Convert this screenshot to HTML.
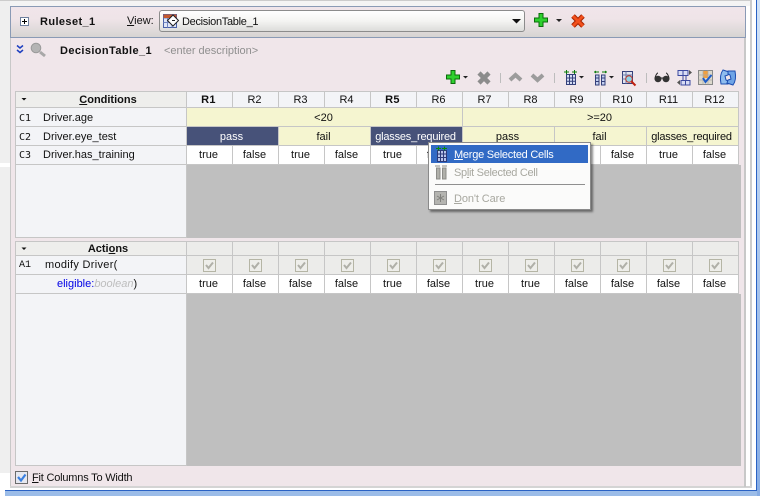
<!DOCTYPE html>
<html>
<head>
<meta charset="utf-8">
<style>
html,body{margin:0;padding:0;background:#fff}
#p{position:relative;width:760px;height:496px;overflow:hidden;background:#fff;font-family:"Liberation Sans",sans-serif;font-size:11px;color:#111}
#p div,#p span.a{box-sizing:border-box}
.a{position:absolute;white-space:nowrap}
.b{font-weight:bold;letter-spacing:.4px}
.row{position:absolute;left:15px;width:724px;display:flex}
.row>div{width:46px;flex:none;text-align:center;padding-right:2px;border-right:1px solid #c6c6c6;border-bottom:1px solid #c6c6c6;background:#fff;height:100%;overflow:visible;white-space:nowrap}
.row>div.l{width:172px;background:#f3f4f7;border-left:1px solid #c6c6c6;text-align:left;position:relative;padding:0}
.row>div.h{background:#eeeeec;text-align:center;font-weight:bold;padding-left:14px}
.row>div.rh{background:#f3f4f7}
.row>div.y{background:#f5f5d0}
.row>div.s{background:#475279;color:#fff}
.row>div.g{background:#ececea}
.m{font-family:"DejaVu Sans Mono",monospace;font-size:10px;position:absolute;left:3px}
.t{position:absolute;left:27px}
.dis{color:#a8a8a0}
.n{letter-spacing:-.2px}
</style>
</head>
<body>
<div id="p">
<!-- window chrome -->
<div class="a" style="left:0;top:0;width:751px;height:1px;background:#ccc"></div>
<div class="a" style="left:0;top:1px;width:751px;height:5px;background:#f4f4f4"></div>
<div class="a" style="left:0;top:1px;width:10px;height:162px;background:#efefef"></div>
<div class="a" style="left:0;top:167px;width:10px;height:306px;background:#efefef"></div>
<div class="a" style="left:10px;top:6px;width:1px;height:481px;background:#c8c8c8"></div>
<div class="a" style="left:750px;top:0;width:2px;height:488px;background:#ccc"></div>
<div class="a" style="left:10px;top:486px;width:742px;height:2px;background:#d4d4d4"></div>
<div class="a" style="left:5px;top:490px;width:752px;height:1px;background:#2a62c4"></div>
<div class="a" style="left:5px;top:491px;width:755px;height:5px;background:#9bbce8"></div>
<div class="a" style="left:756px;top:0;width:1px;height:491px;background:#2a62c4"></div>
<div class="a" style="left:757px;top:0;width:3px;height:496px;background:linear-gradient(#d2e3f7,#86ace4)"></div>
<!-- pink body -->
<div class="a" style="left:11px;top:37px;width:733px;height:449px;background:#f0e6ea"></div>
<div class="a" style="left:744px;top:37px;width:2px;height:450px;background:#c8c8c8"></div>
<!-- header bar -->
<div class="a" style="left:10px;top:6px;width:736px;height:32px;border:1px solid #8a9ab5;background:linear-gradient(#f0e5ea,#efe4e8 40%,#d6d4d2)"></div>
<div class="a b" style="left:40px;top:15px;line-height:14px">Ruleset_1</div>
<div class="a" style="left:127px;top:14px;line-height:14px"><u>V</u>iew:</div>
<div class="a" style="left:159px;top:10px;width:366px;height:22px;border:1px solid #8c8c8c;border-radius:3px;background:linear-gradient(#fff,#f4f4f2 50%,#dcdcda)"></div>
<div class="a" style="left:182px;top:15px;line-height:14px;letter-spacing:-.3px">DecisionTable_1</div>
<!-- row 2 -->
<div class="a b" style="left:60px;top:44px;line-height:14px">DecisionTable_1</div>
<div class="a" style="left:164px;top:44px;line-height:14px;color:#8f8f8f">&lt;enter description&gt;</div>

<!-- conditions -->
<div class="a" style="left:15px;top:91px;width:724px;height:1px;background:#c6c6c6"></div>
<div class="row" style="top:92px;height:16px;line-height:16px"><div class="l h"><u>C</u>onditions</div><div class="rh b">R1</div><div class="rh">R2</div><div class="rh">R3</div><div class="rh">R4</div><div class="rh b">R5</div><div class="rh">R6</div><div class="rh">R7</div><div class="rh">R8</div><div class="rh">R9</div><div class="rh">R10</div><div class="rh">R11</div><div class="rh">R12</div></div>
<div class="row" style="top:108px;height:19px;line-height:21px"><div class="l"><span class="m">C1</span><span class="t">Driver.age</span></div><div class="y" style="width:276px">&lt;20</div><div class="y" style="width:276px">&gt;=20</div></div>
<div class="row" style="top:127px;height:19px;line-height:21px"><div class="l"><span class="m">C2</span><span class="t">Driver.eye_test</span></div><div class="s" style="width:92px">pass</div><div class="y" style="width:92px">fail</div><div class="s n" style="width:92px">glasses_required</div><div class="y" style="width:92px">pass</div><div class="y" style="width:92px">fail</div><div class="y n" style="width:92px">glasses_required</div></div>
<div class="row" style="top:146px;height:19px;line-height:19px"><div class="l"><span class="m">C3</span><span class="t">Driver.has_training</span></div><div>true</div><div>false</div><div>true</div><div>false</div><div>true</div><div>false</div><div>true</div><div>false</div><div>true</div><div>false</div><div>true</div><div>false</div></div>
<div class="a" style="left:15px;top:165px;width:172px;height:73px;background:#f3f4f7;border:1px solid #c6c6c6;border-top:0"></div>
<div class="a" style="left:187px;top:165px;width:554px;height:73px;background:#bfbfbf"></div>

<!-- actions -->
<div class="a" style="left:15px;top:241px;width:724px;height:1px;background:#c6c6c6"></div>
<div class="row" style="top:242px;height:14px;line-height:15px"><div class="l h">Acti<u>o</u>ns</div><div class="g"></div><div class="g"></div><div class="g"></div><div class="g"></div><div class="g"></div><div class="g"></div><div class="g"></div><div class="g"></div><div class="g"></div><div class="g"></div><div class="g"></div><div class="g"></div></div>
<div class="row" style="top:256px;height:19px;line-height:19px"><div class="l"><span class="m" style="font-family:'Liberation Mono',monospace">A1</span><span class="t" style="left:29px;letter-spacing:.3px">modify Driver(</span></div><div class="g"></div><div class="g"></div><div class="g"></div><div class="g"></div><div class="g"></div><div class="g"></div><div class="g"></div><div class="g"></div><div class="g"></div><div class="g"></div><div class="g"></div><div class="g"></div></div>
<div class="row" style="top:275px;height:19px;line-height:19px"><div class="l"><span class="t" style="left:41px"><span style="color:#0000e6">eligible:</span><span style="color:#bdbdbd;font-style:italic">boolean</span>)</span></div><div>true</div><div>false</div><div>false</div><div>false</div><div>true</div><div>false</div><div>true</div><div>true</div><div>false</div><div>false</div><div>false</div><div>false</div></div>
<div class="a" style="left:15px;top:294px;width:172px;height:172px;background:#f3f4f7;border:1px solid #c6c6c6;border-top:0"></div>
<div class="a" style="left:187px;top:294px;width:554px;height:172px;background:#bfbfbf"></div>

<div class="a" style="left:32px;top:471px;line-height:14px;letter-spacing:-.2px"><u>F</u>it Columns To Width</div>

<!-- popup -->
<div class="a" style="left:428px;top:142px;width:163px;height:68px;background:#fbfbfa;border:1px solid #8a8a8a;box-shadow:2px 2px 2px rgba(0,0,0,.45)"></div>
<div class="a" style="left:431px;top:145px;width:157px;height:18px;background:#316ac5"></div>
<div class="a" style="left:454px;top:148px;line-height:14px;color:#fff;letter-spacing:-.25px"><u>M</u>erge Selected Cells</div>
<div class="a dis" style="left:454px;top:166px;line-height:14px;letter-spacing:-.3px">Sp<u>l</u>it Selected Cell</div>
<div class="a" style="left:435px;top:184px;width:150px;height:1px;background:#8f8f8f"></div>
<div class="a dis" style="left:454px;top:192px;line-height:14px;letter-spacing:-.1px"><u>D</u>on't Care</div>

<svg class="a" style="left:0;top:0" width="760" height="496" viewBox="0 0 760 496">
<defs>
<g id="cb"><rect x=".5" y=".5" width="12" height="12" fill="#eeeeea" stroke="#b5b5a5"/><path d="M3 6l2.500 3 4.500-5.500" fill="none" stroke="#b0b0a8" stroke-width="2"/></g>
<g id="plus"><path d="M5 .5h4v4.500h4.500v4h-4.500v4.500h-4v-4.500h-4.500v-4h4.500z" fill="#2ed02e" stroke="#0b6b0b"/></g>
</defs>
<!-- expand box -->
<rect x="20.500" y="17.500" width="8" height="8" fill="#fff" stroke="#6e7f9e"/><path d="M22 21.500h5M24.500 19v5" stroke="#000"/>
<!-- combo icon -->
<rect x="163.500" y="14.500" width="13" height="13" fill="#dfe6f6" stroke="#4a62a8"/><path d="M163.500 18h13M167.500 14.500v13M172 14.500v13M163.500 22.500h13" stroke="#7187c4"/><rect x="163.500" y="14.500" width="13" height="3.500" fill="#c45a30"/><path d="M173 15l5.500 5.500-5.500 5.500-5.500-5.500z" fill="#fff" stroke="#222"/><path d="M172 20.500h3" stroke="#222"/>
<!-- combo arrow -->
<path d="M512 19h9l-4.500 4.500z" fill="#111"/>
<use href="#plus" x="534" y="13"/>
<path d="M556 19h6l-3 3z" fill="#222"/>
<path d="M573 16l10 10M583 16l-10 10" stroke="#a62400" stroke-width="5"/><path d="M573 16l10 10M583 16l-10 10" stroke="#f2501c" stroke-width="3"/>
<!-- chevron double -->
<path d="M17 45.500l3 2.500 3-2.500M17 50l3 2.500 3-2.500" fill="none" stroke="#1e3fc0" stroke-width="1.500"/>
<!-- magnifier gray -->
<circle cx="36" cy="48" r="4.800" fill="#b4b4b4" stroke="#9a9a9a"/><path d="M40 52l5 4" stroke="#a8a8a8" stroke-width="3"/>
<!-- toolbar -->
<use href="#plus" x="446" y="70"/>
<path d="M463 76h5l-2.500 2.500z" fill="#222"/>
<path d="M479 73l10 10M489 73l-10 10" stroke="#8c8c8c" stroke-width="4.500"/>
<path d="M500.500 73v10M554.500 73v10M646.500 73v10" stroke="#bdbdbd"/>
<path d="M510 80l5.500-5 5.500 5" fill="none" stroke="#9c9c9c" stroke-width="4"/>
<path d="M532 75l5.500 5 5.500-5" fill="none" stroke="#9c9c9c" stroke-width="4"/>
<!-- insert row -->
<rect x="566.500" y="74.500" width="9" height="10" fill="#d4dcf4" stroke="#35407a"/><path d="M569.500 74.500v10M572.500 74.500v10M566.500 78h9M566.500 81.300h9" stroke="#35407a"/>
<path d="M564 72h5M572 72h5M566.500 70v4M574.500 70v4" stroke="#0a7a0a"/>
<path d="M579 76h5l-2.500 2.500z" fill="#222"/>
<!-- insert column -->
<rect x="595.500" y="75" width="3.500" height="10" fill="#c4d0f0" stroke="#35407a"/><rect x="601.500" y="75" width="3.500" height="10" fill="#c4d0f0" stroke="#35407a"/>
<path d="M595 78h4M595 81.500h4M601 78h4M601 81.500h4" stroke="#35407a"/>
<path d="M594 72h5M602 72h5" stroke="#0a7a0a"/><path d="M594 72l2-1.500v3zM607 72l-2-1.500v3z" fill="#0a7a0a"/>
<path d="M609 76h5l-2.500 2.500z" fill="#222"/>
<rect x="622.500" y="71.500" width="10" height="12" fill="#dfe3f0" stroke="#35407a"/><path d="M622.500 75h10M622.500 79h10M626 71.500v12" stroke="#6d7aa8"/>
<circle cx="629" cy="79" r="3.300" fill="#8ed4e8" stroke="#c03020"/><path d="M631.500 81.500l4 4" stroke="#c02010" stroke-width="2"/>
<!-- glasses -->
<path d="M655 79c0-3 2-6 3-6M669 79c0-3-2-6-3-6" fill="none" stroke="#222"/>
<ellipse cx="658" cy="79" rx="3.500" ry="3.200" fill="#333"/><ellipse cx="666" cy="79" rx="3.500" ry="3.200" fill="#333"/><path d="M661 78h2" stroke="#222"/>
<!-- split icon -->
<rect x="678" y="70.500" width="5" height="5" fill="#d8dcf4" stroke="#3c49a0"/><rect x="683" y="70.500" width="5" height="5" fill="#d8dcf4" stroke="#3c49a0"/>
<rect x="681" y="80.500" width="4.500" height="4.500" fill="#d8dcf4" stroke="#3c49a0"/><rect x="685.500" y="80.500" width="4.500" height="4.500" fill="#d8dcf4" stroke="#3c49a0"/>
<path d="M683 75.500v5M686 75.500v5" stroke="#3c49a0"/><path d="M689 70l3 2.500-3 2.500zM680 80l-3 2.500 3 2.500z" fill="#555"/>
<!-- check grid icon -->
<rect x="698.500" y="70.500" width="14" height="14" fill="#dcd8cc" stroke="#888"/><rect x="703" y="71" width="5" height="7" fill="#f0a040"/><path d="M698.500 75h14M698.500 80h14M703 70.500v14M708 70.500v14" stroke="#aaa" stroke-width=".7"/><path d="M703 78l2.500 4 6-7" fill="none" stroke="#1e5cc8" stroke-width="2"/>
<!-- refresh icon -->
<path d="M721 84c-1-5-1-10 2-14l6 2-1 3-3 1 1 4 2 1v3z" fill="#8fbdee" stroke="#1c4db0"/><path d="M735 71c1 5 1 10-2 14l-6-2 1-3 3-1-1-4-2-1v-3z" fill="#6fa4e6" stroke="#1c4db0"/>
<!-- section triangles -->
<path d="M21.500 98h5l-2.500 2.500z" fill="#111"/>
<path d="M21.500 247.500h5l-2.500 2.500z" fill="#111"/>
<!-- action checkboxes -->
<use href="#cb" x="203" y="259"/><use href="#cb" x="249" y="259"/><use href="#cb" x="295" y="259"/><use href="#cb" x="341" y="259"/><use href="#cb" x="387" y="259"/><use href="#cb" x="433" y="259"/><use href="#cb" x="479" y="259"/><use href="#cb" x="525" y="259"/><use href="#cb" x="571" y="259"/><use href="#cb" x="617" y="259"/><use href="#cb" x="663" y="259"/><use href="#cb" x="709" y="259"/>
<!-- fit checkbox -->
<rect x="15.500" y="471.500" width="12" height="12" fill="#e6e8f0" stroke="#6c6c6c"/><path d="M18 477l3 3.500 4.500-6" fill="none" stroke="#3a7fe0" stroke-width="2.200"/>
<!-- popup icons -->
<rect x="437.500" y="150.500" width="9" height="11" fill="#b8c4ea" stroke="#2c3a78"/><path d="M440.500 150.500v11M443.500 150.500v11M437.500 154h9M437.500 157.500h9" stroke="#2c3a78"/>
<path d="M436 148.500h5M442 148.500h5M438.500 146.500v4M444.500 146.500v4" stroke="#0a8a0a"/>
<rect x="436.500" y="168" width="3.500" height="11" fill="#b0b0aa" stroke="#8c8c88"/><rect x="442.500" y="168" width="3.500" height="11" fill="#b0b0aa" stroke="#8c8c88"/>
<path d="M435 166h5M442 166h5" stroke="#8c8c88"/>
<rect x="434.500" y="191.500" width="12" height="13" fill="#b4b4b0" stroke="#8f8f8f"/><path d="M440.500 194v8M437 196l7 4M444 196l-7 4" stroke="#80807c"/>
</svg>
</div>
</body>
</html>
